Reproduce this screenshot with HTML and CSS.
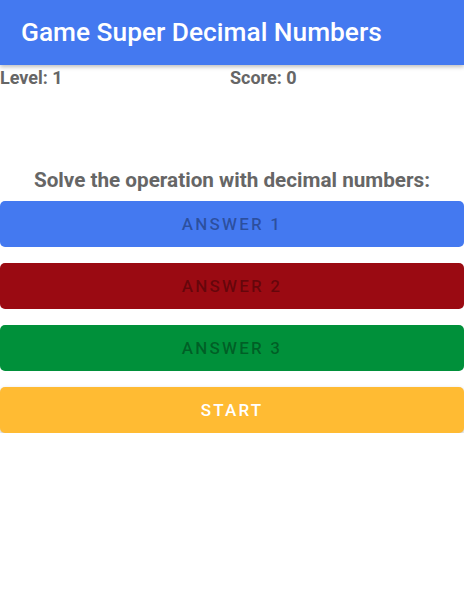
FILE: index.html
```html
<!DOCTYPE html>
<html lang="en">
<head>
  <meta charset="UTF-8" />
  <meta name="viewport" content="width=device-width, initial-scale=1" />
  <title>Game Super Decimal Numbers</title>
  <link rel="stylesheet" href="styles.css">
</head>
<body>

<header class="toolbar">
  <h1 class="title">Game Super Decimal Numbers</h1>
</header>

<main class="content">
  <div class="stats">
    <div class="stat">Level: 1</div>
    <div class="stat">Score: 0</div>
  </div>

  <h2 class="question">Solve the operation with decimal numbers:</h2>

  <div class="buttons">
    <button class="btn btn-blue" disabled>Answer 1</button>
    <button class="btn btn-red" disabled>Answer 2</button>
    <button class="btn btn-green" disabled>Answer 3</button>
    <button class="btn btn-yellow">Start</button>
  </div>
</main>

</body>
</html>
```

FILE: styles.css
```css
body {
  margin: 0;
  font-family: Roboto, 'Liberation Sans', sans-serif;
  background: #fff;
  color: #666;
}

.toolbar {
  height: 65px;
  background: #4479f0;
  box-shadow: 0 2px 4px rgba(0,0,0,0.25);
  display: flex;
  align-items: center;
  padding: 0 21px;
  position: relative;
  z-index: 1;
}

.title {
  margin: 0;
  color: #fff;
  font-size: 26.3px;
  font-weight: 500;
  padding-bottom: 2px;
}

.stats {
  display: grid;
  grid-template-columns: 230px 1fr;
  padding-top: 2px;
}

.stat {
  font-size: 18px;
  font-weight: 700;
  line-height: 22px;
}

.question {
  margin: 79px 0 9px;
  text-align: center;
  font-size: 20.7px;
  font-weight: 700;
  line-height: 24px;
}

.buttons {
  display: flex;
  flex-direction: column;
  gap: 16px;
}

.btn {
  height: 46px;
  border: 0;
  border-radius: 5px;
  font-family: inherit;
  font-size: 17px;
  font-weight: 500;
  letter-spacing: 2.2px;
  text-transform: uppercase;
  color: #fff;
  padding: 0;
}

.btn:disabled {
  color: rgba(0,0,0,0.35);
}

.btn-blue { background: #4479f0; }
.btn-red { background: #9a0a12; }
.btn-green { background: #00903a; }

.btn-yellow {
  background: #ffbb33;
  box-shadow: 0 2px 4px rgba(0,0,0,0.25);
}
```
